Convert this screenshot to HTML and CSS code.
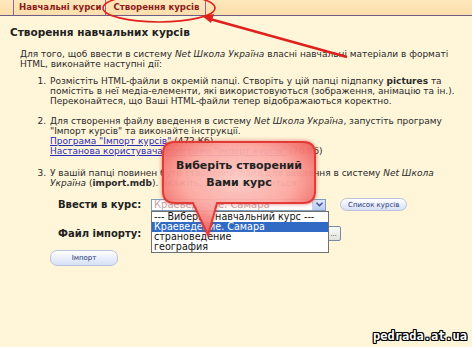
FILE: index.html
```html
<!DOCTYPE html>
<html lang="uk">

<head>
    <meta charset="UTF-8">
    <title>Створення курсів</title>
    <link rel="stylesheet" href="styles.css">
</head>

<body>
    <div class="tabs">
        <a class="tab" href="#">Навчальні курси</a>
        <a class="tab active" href="#">Створення курсів</a>
    </div>

    <div class="page">
        <h2>Створення навчальних курсів</h2>
        <p class="intro">Для того, щоб ввести в систему <i>Net Школа Україна</i> власні навчальні матеріали в форматі<br>
            HTML, виконайте наступні дії:</p>

        <ol class="steps">
            <li>Розмістіть HTML-файли в окремій папці. Створіть у цій папці підпапку <b>pictures</b> та<br>
                помістіть в неї медіа-елементи, які використовуються (зображення, анімацію та ін.).<br>
                Переконайтеся, що Ваші HTML-файли тепер відображаються коректно.</li>
            <li>Для створення файлу введення в систему <i>Net Школа Україна</i>, запустіть програму<br>
                "Імпорт курсів" та виконайте інструкції.<br>
                <a href="#">Програма "Імпорт курсів"</a> (472 Кб)<br>
                <a href="#">Настанова користувача програми "Імпорт курсів"</a> (70 Кб)</li>
            <li>У вашій папці повинен бути створений файл для введення в систему <i>Net Школа</i><br>
                <i>Україна</i> (<b>import.mdb</b>). Вкажіть, де він знаходиться:</li>
        </ol>

        <div class="import-form">
            <label class="field-label">Ввести в курс:</label>
            <div class="field-row">
                <div class="select">
                    <span class="select-value">Краеведение. Самара</span>
                    <span class="select-arrow">
                        <svg width="7" height="5" viewBox="0 0 7 5"><path d="M0.5 0.8 L3.5 3.8 L6.5 0.8" fill="none" stroke="#3a4f9c" stroke-width="1.4"/></svg>
                    </span>
                    <ul class="dropdown">
                        <li>--- Виберіть навчальний курс ---</li>
                        <li class="selected">Краеведение. Самара</li>
                        <li>страноведение</li>
                        <li>география</li>
                    </ul>
                </div>
                <button class="pill-btn" type="button">Список курсів</button>
            </div>

            <label class="field-label">Файл імпорту:</label>
            <div class="field-row">
                <div class="file-input">
                    <span class="file-text"></span>
                    <span class="file-btn">...</span>
                </div>
            </div>
        </div>

        <button class="pill-btn import-btn" type="button">Імпорт</button>
    </div>

    <div class="callout">
        <svg class="callout-shape" width="164" height="104" viewBox="0 0 164 104">
            <defs>
                <radialGradient id="calloutFill" cx="50%" cy="40%" r="65%">
                    <stop offset="0" stop-color="#ffd4cf" stop-opacity="0.92"/>
                    <stop offset="0.55" stop-color="#ffb0aa" stop-opacity="0.88"/>
                    <stop offset="1" stop-color="#f05a55" stop-opacity="0.95"/>
                </radialGradient>
            </defs>
            <path d="M16 3 H144 Q156 3 156 15 V52 Q156 64 144 64 H58 L49 96 L34 64 H16 Q4 64 4 52 V15 Q4 3 16 3 Z"
                fill="url(#calloutFill)" stroke="#e23a36" stroke-width="2"/>
        </svg>
        <div class="callout-text">Виберіть створений<br>Вами курс</div>
    </div>

    <svg class="marks" width="472" height="347" viewBox="0 0 472 347">
        <ellipse cx="159" cy="8" rx="56" ry="14" fill="none" stroke="#e0201c" stroke-width="1.6"/>
        <line x1="347" y1="57" x2="210" y2="19" stroke="#e0201c" stroke-width="2.4"/>
        <path d="M202 16 L214 14 L211 23 Z" fill="#e0201c"/>
    </svg>

    <div class="watermark">pedrada.at.ua</div>
</body>

</html>
```

FILE: styles.css
```css
body {
    margin: 0;
    width: 472px;
    height: 347px;
    overflow: hidden;
    position: relative;
    background: #fff6da;
    font-family: 'DejaVu Sans', Verdana, sans-serif;
    font-size: 9px;
    color: #2a2a2a;
}

.tabs {
    display: flex;
    height: 15px;
    padding-left: 13px;
    background: linear-gradient(#fde7bb, #fcdeab);
    border-bottom: 1px solid #6d5d88;
}

.tab {
    padding: 0 4px 0 5px;
    line-height: 15px;
    font-size: 8.6px;
    font-weight: bold;
    color: #8b1c1c;
    text-decoration: none;
    border-left: 1px solid #8a6a9a;
}

.tab.active {
    padding: 0 5px 0 7px;
    border-right: 1px solid #8a6a9a;
}

.page {
    padding: 10px 0 0 10px;
}

h2 {
    margin: 0;
    font-size: 10.5px;
    line-height: 12px;
    color: #222;
}

.intro {
    margin: 11px 0 0 10px;
    line-height: 10px;
}

.steps {
    margin: 7px 0 0 0;
    padding-left: 39px;
    line-height: 10px;
}

.steps li {
    padding-left: 1px;
}

.steps li + li {
    margin-top: 10px;
}

.steps li:last-child {
    margin-top: 12px;
}

.steps a {
    color: #2b2bb8;
}

.import-form {
    display: grid;
    grid-template-columns: 93px auto;
    row-gap: 15px;
    align-items: center;
    margin: 10px 0 0 48px;
}

.field-label {
    font-size: 10px;
    font-weight: bold;
    color: #222;
}

.field-row {
    display: flex;
    align-items: center;
    gap: 14px;
}

.select {
    position: relative;
    display: flex;
    width: 175px;
    height: 12px;
    background: #fff;
    border: 1px solid #7f9db9;
    box-sizing: border-box;
}

.select-value {
    flex: 1;
    padding-left: 2px;
    font-size: 10px;
    line-height: 10px;
    color: #c9a6a6;
}

.select-arrow {
    display: flex;
    align-items: center;
    justify-content: center;
    width: 12px;
    background: linear-gradient(#dfe8fb, #b9c9ef);
    border-left: 1px solid #c3d3fd;
}

.dropdown {
    position: absolute;
    top: 11px;
    left: -1px;
    width: 176px;
    margin: 0;
    padding: 0;
    list-style: none;
    background: #fff;
    border: 1px solid #707070;
    font-size: 9.6px;
    line-height: 10px;
    color: #111;
    z-index: 2;
}

.dropdown li {
    padding-left: 2px;
    height: 10px;
}

.dropdown li.selected {
    background: #316ac5;
    color: #fff;
}

.pill-btn {
    height: 13px;
    padding: 0 7px;
    font-family: 'DejaVu Sans', Verdana, sans-serif;
    font-size: 7px;
    color: #223377;
    background: linear-gradient(#ffffff, #d6dff5);
    border: 1px solid #b8c2dc;
    border-radius: 7px;
}

.file-input {
    display: flex;
    width: 190px;
    height: 15px;
}

.file-text {
    flex: 1;
    background: #fff;
    border: 1px solid #7f9db9;
}

.file-btn {
    width: 13px;
    margin-left: 1px;
    font-size: 7px;
    line-height: 15px;
    text-align: center;
    color: #444;
    background: linear-gradient(#fafafa, #e2e2dc);
    border: 1px solid #7a8aa8;
    border-radius: 2px;
}

.import-btn {
    width: 68px;
    height: 16px;
    margin: 9px 0 0 40px;
}

.callout {
    position: absolute;
    left: 159px;
    top: 139px;
    width: 164px;
    height: 104px;
    z-index: 3;
}

.callout-shape {
    position: absolute;
    left: 0;
    top: 0;
    filter: drop-shadow(0 0 2px rgba(200, 40, 40, 0.6));
}

.callout-text {
    position: relative;
    width: 160px;
    padding-top: 18px;
    text-align: center;
    font-size: 11px;
    line-height: 17px;
    font-weight: bold;
    color: #222;
}

.marks {
    position: absolute;
    left: 0;
    top: 0;
    z-index: 4;
    pointer-events: none;
}

.watermark {
    position: absolute;
    right: 5px;
    bottom: 4px;
    font-family: 'DejaVu Sans Mono', monospace;
    font-size: 12px;
    font-weight: bold;
    color: #fff;
    text-shadow: -1px -1px 0 #000, 1px -1px 0 #000, -1px 1px 0 #000, 1px 1px 0 #000, 0 1px 0 #000, 0 -1px 0 #000, 1px 0 0 #000, -1px 0 0 #000;
}
```
